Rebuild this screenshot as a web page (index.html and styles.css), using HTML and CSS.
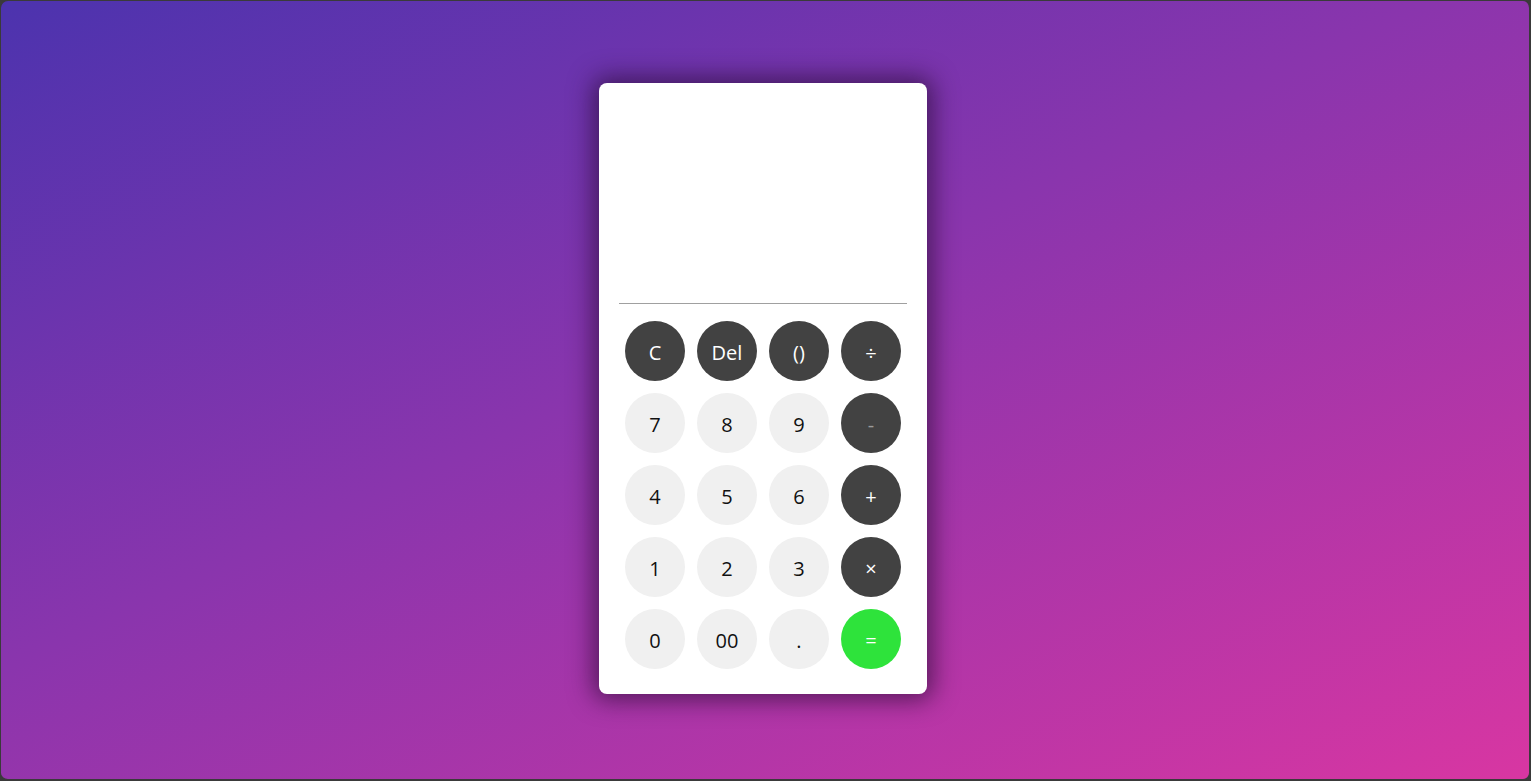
FILE: index.html
```html
<!DOCTYPE html>
<html lang="en">
<head>
<meta charset="utf-8">
<title>Calculator</title>
<link rel="stylesheet" href="styles.css">
</head>
<body>
<div class="frame">
  <div class="calc">
    <div class="display"></div>
    <div class="keys">
      <button class="key dark">C</button>
      <button class="key dark">Del</button>
      <button class="key dark">()</button>
      <button class="key dark">÷</button>
      <button class="key">7</button>
      <button class="key">8</button>
      <button class="key">9</button>
      <button class="key dark minus">-</button>
      <button class="key">4</button>
      <button class="key">5</button>
      <button class="key">6</button>
      <button class="key dark">+</button>
      <button class="key">1</button>
      <button class="key">2</button>
      <button class="key">3</button>
      <button class="key dark">×</button>
      <button class="key">0</button>
      <button class="key">00</button>
      <button class="key">.</button>
      <button class="key equals">=</button>
    </div>
  </div>
</div>
</body>
</html>
```
FILE: styles.css
```css
html, body {
  margin: 0;
  height: 100%;
  background: #3a3a3a;
}
.frame {
  box-sizing: border-box;
  height: 100vh;
  border-style: solid;
  border-color: #3a3a3a;
  border-width: 1px 2px 2px 1px;
  border-radius: 8px;
  background: linear-gradient(155deg, #4c33ae 0%, #8a35ad 45%, #d836a2 100%);
  display: flex;
  justify-content: center;
  align-items: flex-start;
  padding-top: 82px;
  padding-right: 4px;
}
.calc {
  width: 328px;
  height: 611px;
  box-sizing: border-box;
  background: #fff;
  border-radius: 8px;
  box-shadow: 0 0 24px 6px rgba(40, 10, 50, 0.65);
  display: flex;
  flex-direction: column;
}
.display {
  height: 220px;
  margin: 0 20px;
  border-bottom: 1px solid #a0a0a0;
  flex: none;
}
.keys {
  display: grid;
  grid-template-columns: repeat(4, 60px);
  grid-auto-rows: 60px;
  gap: 12px;
  padding: 17px 26px 0 26px;
}
.key {
  width: 60px;
  height: 60px;
  border: none;
  border-radius: 50%;
  background: #f0f0f0;
  color: #111;
  font-family: "Open Sans", "Noto Sans", sans-serif;
  font-size: 20px;
  padding: 0;
  padding-top: 2px;
  display: flex;
  align-items: center;
  justify-content: center;
}
.key.dark {
  background: #424242;
  color: #fff;
}
.key.minus {
  color: #9a9a9a;
}
.key.equals {
  background: #2ee33b;
  color: #fff;
}
```
